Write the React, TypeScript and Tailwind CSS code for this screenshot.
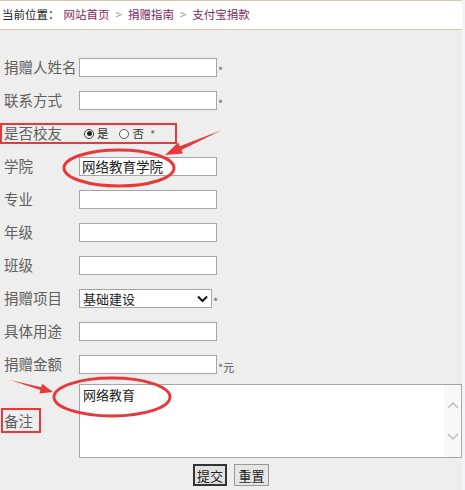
import React from 'react';

const font = { fontFamily: '"Noto Sans CJK SC", "Noto Sans", sans-serif' };

function Star({ text = '*' }: { text?: string }) {
  return <span className="ml-[1px] mt-[6px] text-[11px] leading-none text-[#666]">{text}</span>;
}

function Field({ label, value, star, suffix }: { label: string; value?: string; star?: boolean; suffix?: string }) {
  return (
    <div className="flex h-[33px] items-center">
      <div className="w-[79px] pl-[4px] text-[14.5px] leading-none text-[#5f5f5f]">{label}</div>
      <div className="flex h-[19px] w-[138px] items-center border border-[#a5a5a5] bg-white pl-[2px] text-[13.5px] leading-none text-[#222]">{value}</div>
      {star && <Star />}
      {suffix && <span className="mt-[5px] text-[11px] leading-none text-[#555]">{suffix}</span>}
    </div>
  );
}

export default function App() {
  return (
    <div className="relative h-[490px] w-[465px] overflow-hidden bg-[#eeeeee]" style={font}>
      <div className="flex">
        <div className="w-[462px]">
          <div className="flex h-[30px] items-center border-y border-[#d6c8a8] bg-white pl-[2px] text-[11.5px] leading-none">
            <span className="text-[#222]">当前位置：</span>
            <span className="ml-[4px] text-[#7f2a5c]">网站首页</span>
            <span className="mx-[6px] text-[#999]">&gt;</span>
            <span className="text-[#7f2a5c]">捐赠指南</span>
            <span className="mx-[6px] text-[#999]">&gt;</span>
            <span className="text-[#7f2a5c]">支付宝捐款</span>
          </div>

          <div className="pt-[21px]">
            <Field label="捐赠人姓名" star />
            <Field label="联系方式" star />
            <div className="flex h-[33px] items-center">
              <div className="w-[79px] pl-[4px] text-[14.5px] leading-none text-[#5f5f5f]">是否校友</div>
              <div className="ml-[5px] flex items-center text-[11.5px] leading-none text-[#333]">
                <span className="flex h-[10px] w-[10px] items-center justify-center rounded-full border border-[#333] bg-white">
                  <span className="h-[5px] w-[5px] rounded-full bg-[#222]" />
                </span>
                <span className="ml-[3px]">是</span>
                <span className="ml-[10px] h-[10px] w-[10px] rounded-full border border-[#555] bg-white" />
                <span className="ml-[4px]">否</span>
                <span className="ml-[6px] mt-[3px] text-[#666]">*</span>
              </div>
            </div>
            <Field label="学院" value="网络教育学院" />
            <Field label="专业" />
            <Field label="年级" />
            <Field label="班级" />
            <div className="flex h-[33px] items-center">
              <div className="w-[79px] pl-[4px] text-[14.5px] leading-none text-[#5f5f5f]">捐赠项目</div>
              <div className="flex h-[19px] w-[133px] items-center justify-between border border-[#a5a5a5] bg-white pl-[3px] pr-[3px] text-[13px] leading-none text-[#222]">
                <span>基础建设</span>
                <svg width="11" height="8" viewBox="0 0 11 8">
                  <path d="M1 1.5 L5.5 6 L10 1.5" fill="none" stroke="#111" strokeWidth="2" />
                </svg>
              </div>
              <Star />
            </div>
            <Field label="具体用途" />
            <Field label="捐赠金额" star suffix="元" />

            <div className="mt-[3px] flex items-center">
              <div className="w-[79px] pl-[4px] text-[14.5px] leading-none text-[#5f5f5f]">备注</div>
              <div className="flex h-[74px] flex-1 border border-[#a5a5a5] bg-white">
                <div className="flex-1 pl-[3px] pt-[2px] text-[13px] leading-[16px] text-[#222]">网络教育</div>
                <div className="flex w-[17px] flex-col items-center justify-between bg-[#f8f8f8] py-[16px]">
                  <svg width="12" height="8" viewBox="0 0 12 8">
                    <path d="M1 7 L6 2 L11 7" fill="none" stroke="#bbb" strokeWidth="1.5" />
                  </svg>
                  <svg width="12" height="8" viewBox="0 0 12 8">
                    <path d="M1 1 L6 6 L11 1" fill="none" stroke="#bbb" strokeWidth="1.5" />
                  </svg>
                </div>
              </div>
            </div>

            <div className="mt-[6px] flex justify-center gap-[7px]">
              <button className="h-[22px] w-[34px] border-2 border-[#333] bg-[#e2e2e2] text-[13px] leading-none text-[#222]">提交</button>
              <button className="h-[22px] w-[35px] border border-[#999] bg-[#e6e6e6] text-[13px] leading-none text-[#222]">重置</button>
            </div>
          </div>
        </div>
        <div className="h-[490px] w-[3px] bg-[#f2f5f8]" />
      </div>

      <svg className="pointer-events-none absolute left-0 top-0" width="465" height="490" viewBox="0 0 465 490">
        <rect x="1" y="124" width="175" height="19" fill="none" stroke="#e8393a" strokeWidth="2" />
        <rect x="2" y="409" width="38" height="23" fill="none" stroke="#e8393a" strokeWidth="2" />
        <ellipse cx="119" cy="168" rx="55" ry="18" fill="none" stroke="#e8393a" strokeWidth="3" />
        <ellipse cx="112" cy="397" rx="58" ry="19" fill="none" stroke="#e8393a" strokeWidth="3" />
        <polygon points="222,130 179.8,146.3 178.2,142.6 165,155 183,153.6 181.4,149.9" fill="#e8393a" />
        <polygon points="10,380 41.2,387.2 42.1,383.8 53,392 39.5,393.4 40.4,390" fill="#e8393a" />
      </svg>
    </div>
  );
}
